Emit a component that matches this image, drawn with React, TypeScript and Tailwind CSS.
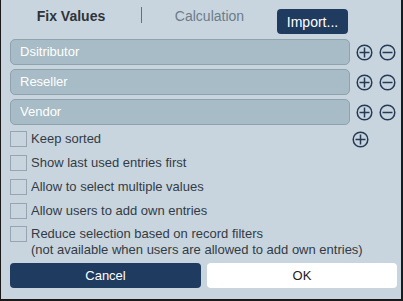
import React from "react";

function PlusIcon() {
  return (
    <svg width="17" height="17" viewBox="0 0 17 17" fill="none" stroke="#243a55" strokeWidth="1.5">
      <circle cx="8.5" cy="8.5" r="7.3" />
      <path d="M8.5 3.5v10M3.5 8.5h10" />
    </svg>
  );
}

function MinusIcon() {
  return (
    <svg width="17" height="17" viewBox="0 0 17 17" fill="none" stroke="#243a55" strokeWidth="1.5">
      <circle cx="8.5" cy="8.5" r="7.3" />
      <path d="M3.5 8.5h10" />
    </svg>
  );
}

function Checkbox() {
  return <div className="w-[17px] h-[16px] shrink-0 border border-[#96a5b1] bg-[#c8d5df]" />;
}

export default function App() {
  const fields = ["Dsitributor", "Reseller", "Vendor"];
  const options = [
    "Show last used entries first",
    "Allow to select multiple values",
    "Allow users to add own entries",
  ];

  return (
    <div
      className="w-[403px] h-[301px] bg-[#c8d5df] border-l border-r-2 border-b-2 border-[#1a1a1a] text-[13px] text-[#333b44] overflow-hidden"
      style={{ fontFamily: '"Liberation Sans", Arial, sans-serif' }}
    >
      {/* Tabs */}
      <div className="flex items-start h-[39px]">
        <div className="w-[140px] pt-[6px] text-center text-[14px] font-bold text-[#2f3438]">Fix Values</div>
        <div className="w-px h-[16px] mt-[7px] bg-[#5d7185]" />
        <div className="w-[135px] pt-[6px] text-center text-[14px] text-[#6c7c8a]">Calculation</div>
        <button className="mt-[9px] w-[71px] h-[25px] rounded-[4px] bg-[#1f3b60] text-white text-[14px] leading-none">
          Import...
        </button>
      </div>

      {/* Fields */}
      <div className="flex flex-col gap-[4px] pl-[9px]">
        {fields.map((f) => (
          <div key={f} className="flex items-center">
            <div className="w-[340px] h-[26px] rounded-[5px] bg-[#a7bcc6] border border-[#8ea3ae] text-white pl-[9px] flex items-center">
              {f}
            </div>
            <div className="ml-[6px] flex gap-[6px]">
              <PlusIcon />
              <MinusIcon />
            </div>
          </div>
        ))}
      </div>

      {/* Options */}
      <div className="flex flex-col pl-[9px] mt-[2px]">
        <div className="flex items-center h-[24px]">
          <Checkbox />
          <span className="ml-[4px] w-[321px]">Keep sorted</span>
          <PlusIcon />
        </div>
        {options.map((o) => (
          <div key={o} className="flex items-center h-[24px]">
            <Checkbox />
            <span className="ml-[4px]">{o}</span>
          </div>
        ))}
        <div className="flex items-start pt-[3px]">
          <Checkbox />
          <div className="ml-[4px] leading-[16px]">
            <div>Reduce selection based on record filters</div>
            <div>(not available when users are allowed to add own entries)</div>
          </div>
        </div>
      </div>

      {/* Buttons */}
      <div className="flex gap-[6px] pl-[9px] mt-[5px]">
        <button className="w-[191px] h-[25px] rounded-[4px] bg-[#1f3b60] text-white text-[13px]">Cancel</button>
        <button className="w-[190px] h-[25px] rounded-[4px] bg-white text-[#222] text-[13px]">OK</button>
      </div>
    </div>
  );
}
